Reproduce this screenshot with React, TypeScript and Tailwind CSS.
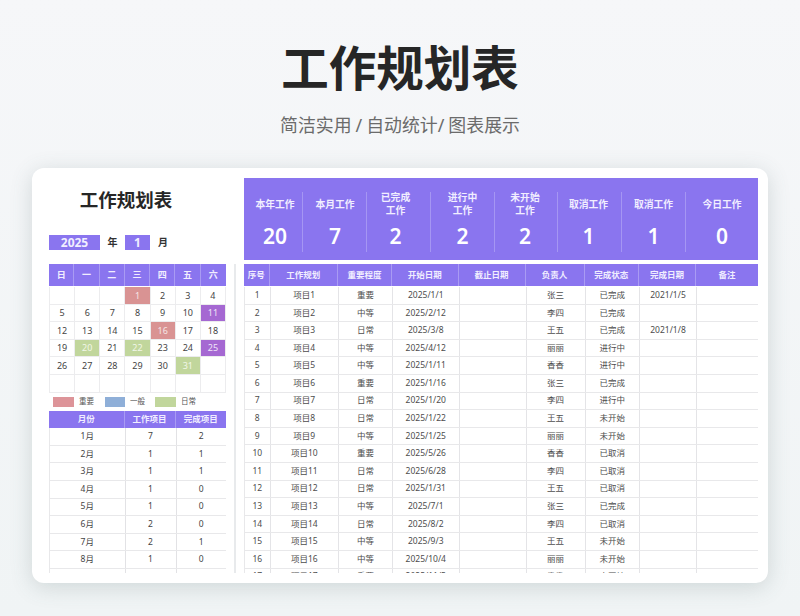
const kpis: [string[], string, string][] = [
  [["本年工作"], "20", "pl-[4px]"],
  [["本月工作"], "7", "pl-[1px]"],
  [["已完成", "工作"], "2", "pr-[6px]"],
  [["进行中", "工作"], "2", ""],
  [["未开始", "工作"], "2", "pr-[2px]"],
  [["取消工作"], "1", "pr-[2px]"],
  [["取消工作"], "1", ""],
  [["今日工作"], "0", ""],
];

const headers = ["序号", "工作规划", "重要程度", "开始日期", "截止日期", "负责人", "完成状态", "完成日期", "备注"];

const rows: string[][] = [
  ["1", "项目1", "重要", "2025/1/1", "", "张三", "已完成", "2021/1/5", ""],
  ["2", "项目2", "中等", "2025/2/12", "", "李四", "已完成", "", ""],
  ["3", "项目3", "日常", "2025/3/8", "", "王五", "已完成", "2021/1/8", ""],
  ["4", "项目4", "中等", "2025/4/12", "", "丽丽", "进行中", "", ""],
  ["5", "项目5", "中等", "2025/1/11", "", "香香", "进行中", "", ""],
  ["6", "项目6", "重要", "2025/1/16", "", "张三", "已完成", "", ""],
  ["7", "项目7", "日常", "2025/1/20", "", "李四", "进行中", "", ""],
  ["8", "项目8", "日常", "2025/1/22", "", "王五", "未开始", "", ""],
  ["9", "项目9", "中等", "2025/1/25", "", "丽丽", "未开始", "", ""],
  ["10", "项目10", "重要", "2025/5/26", "", "香香", "已取消", "", ""],
  ["11", "项目11", "日常", "2025/6/28", "", "李四", "已取消", "", ""],
  ["12", "项目12", "日常", "2025/1/31", "", "王五", "已取消", "", ""],
  ["13", "项目13", "中等", "2025/7/1", "", "张三", "已完成", "", ""],
  ["14", "项目14", "日常", "2025/8/2", "", "李四", "已取消", "", ""],
  ["15", "项目15", "中等", "2025/9/3", "", "王五", "未开始", "", ""],
  ["16", "项目16", "中等", "2025/10/4", "", "丽丽", "未开始", "", ""],
  ["17", "项目17", "重要", "2025/11/5", "", "香香", "未开始", "", ""],
];

const months = [
  ["1月", "7", "2"],
  ["2月", "1", "1"],
  ["3月", "1", "1"],
  ["4月", "1", "0"],
  ["5月", "1", "0"],
  ["6月", "2", "0"],
  ["7月", "2", "1"],
  ["8月", "1", "0"],
  ["9月", "1", "0"],
];

const weekdays = ["日", "一", "二", "三", "四", "五", "六"];
const days: string[] = [
  "", "", "", "1", "2", "3", "4",
  "5", "6", "7", "8", "9", "10", "11",
  "12", "13", "14", "15", "16", "17", "18",
  "19", "20", "21", "22", "23", "24", "25",
  "26", "27", "28", "29", "30", "31", "",
  "", "", "", "", "", "", "",
];
const red = ["1", "16"];
const purple = ["11", "25"];
const green = ["20", "22", "31"];

function dayClass(d: string) {
  if (red.includes(d)) return "bg-[#d99393] text-[#f6e6e6]";
  if (purple.includes(d)) return "bg-[#a568d2] text-[#f0e4f8]";
  if (green.includes(d)) return "bg-[#c1d69c] text-[#f2f7e8]";
  return "text-[#444444]";
}

export default function App() {
  return (
    <div className="h-[616px] w-[800px] overflow-hidden bg-gradient-to-b from-[#f6f7f9] to-[#f0f4f5] font-['Noto_Sans','Noto_Sans_CJK_SC',sans-serif]">
      <div className="flex h-[168px] flex-col items-center">
        <h1 className="mt-[36px] h-[64px] text-[47.5px] leading-[64px] font-bold text-[#262626]">工作规划表</h1>
        <p className="mt-[13px] text-[17.9px] leading-[24px] text-[#6b6b6b] [word-spacing:-0.7px]">简洁实用 / 自动统计/ 图表展示</p>
      </div>

      <div className="mx-[32px] flex h-[415px] rounded-[12px] bg-white pt-[10px] pr-[10px] pl-[17px] shadow-[0_4px_22px_rgba(70,95,95,0.2)]">
        {/* left column */}
        <div className="h-[395px] w-[177px] shrink-0 overflow-hidden">
          <div className="h-[44px] pr-[23px] text-center text-[18.5px] leading-[44px] font-bold text-[#262626]">工作规划表</div>
          <div className="mt-[13px] flex h-[15px] items-center text-[10px] font-bold text-[#333333]">
            <div className="h-full w-[51px] bg-[#8a75ef] text-center text-[12px] leading-[15px] text-[#f1eeff]">2025</div>
            <div className="w-[25px] text-center">年</div>
            <div className="h-full w-[25px] bg-[#8a75ef] text-center text-[12px] leading-[15px] text-[#f1eeff]">1</div>
            <div className="w-[26px] text-center">月</div>
          </div>

          <div className="mt-[14px] grid h-[22px] grid-cols-7 bg-[#8a75ef]">
            {weekdays.map((w) => (
              <div key={w} className="flex items-center justify-center border-r border-[#a99bf3] text-[9px] font-bold text-[#f1eeff] last:border-r-0">
                {w}
              </div>
            ))}
          </div>
          <div className="mt-px grid grid-cols-7 border-l border-[#ececee]">
            {days.map((d, i) => (
              <div key={i} className={`flex h-[17.6px] items-center justify-center border-r border-b border-[#ececee] text-[9px] ${dayClass(d)}`}>
                {d}
              </div>
            ))}
          </div>

          <div className="flex h-[18px] items-center pl-[4px] text-[7.5px] text-[#555555]">
            <span className="h-[10px] w-[21px] bg-[#dd9499]" />
            <span className="ml-[5px] w-[26px]">重要</span>
            <span className="h-[10px] w-[20px] bg-[#8fafd8]" />
            <span className="ml-[5px] w-[25px]">一般</span>
            <span className="h-[10px] w-[21px] bg-[#c1d69c]" />
            <span className="ml-[5px]">日常</span>
          </div>

          <div className="grid h-[17.6px] grid-cols-[75.5px_51px_50.5px] bg-[#8a75ef] text-[8.5px] font-bold text-[#f1eeff]">
            {["月份", "工作项目", "完成项目"].map((h) => (
              <div key={h} className="flex items-center justify-center border-r border-[#a99bf3] last:border-r-0">
                {h}
              </div>
            ))}
          </div>
          {months.map((m) => (
            <div key={m[0]} className="grid h-[17.6px] grid-cols-[75.5px_51px_50.5px] border-b border-l border-[#e8e8ea] text-[8.5px] text-[#444444]">
              {m.map((c, i) => (
                <div key={i} className="flex items-center justify-center border-r border-[#e2e2e5]">
                  {c}
                </div>
              ))}
            </div>
          ))}
        </div>

        {/* divider */}
        <div className="flex h-[395px] w-[18px] shrink-0 justify-center pt-[86px]">
          <div className="h-full w-[2px] bg-[#e8eaec]" />
        </div>

        {/* right column */}
        <div className="h-[395px] min-w-0 flex-1 overflow-hidden">
          <div className="grid h-[82px] grid-cols-[59px_64px_64px_64px_63px_64px_64px_72px] bg-[#8a75ef] text-[#f1eeff]">
            {kpis.map(([label, value, nudge], i) => (
              <div key={i} className={`my-[14px] flex h-[60px] flex-col items-center border-r border-[#a596f3] last:border-r-0 ${nudge}`}>
                <div className="flex h-[24px] flex-col items-center justify-center text-center text-[9.8px] leading-[13px] font-semibold">
                  {label.map((l) => (
                    <span key={l}>{l}</span>
                  ))}
                </div>
                <div className="mt-[8px] h-[24px] text-[21px] leading-[24px] font-semibold text-white">{value}</div>
              </div>
            ))}
          </div>

          <div className="mt-[4px] grid h-[22px] grid-cols-[25.5px_68.5px_54px_66.5px_67px_59px_54.5px_57px_62px] bg-[#8a75ef] text-[8.5px] font-bold text-[#f1eeff]">
            {headers.map((h) => (
              <div key={h} className="flex items-center justify-center border-r border-[#a99bf3] last:border-r-0">
                {h}
              </div>
            ))}
          </div>
          <div className="mt-px">
            {rows.map((r) => (
              <div key={r[0]} className="grid h-[17.6px] grid-cols-[25.5px_68.5px_54px_66.5px_67px_59px_54.5px_57px_62px] border-b border-l border-[#e8e8ea] text-[8.5px] text-[#4d4d4d]">
                {r.map((c, i) => (
                  <div key={i} className="flex items-center justify-center border-r border-[#e4e4e7]">
                    {c}
                  </div>
                ))}
              </div>
            ))}
          </div>
        </div>
      </div>
    </div>
  );
}
